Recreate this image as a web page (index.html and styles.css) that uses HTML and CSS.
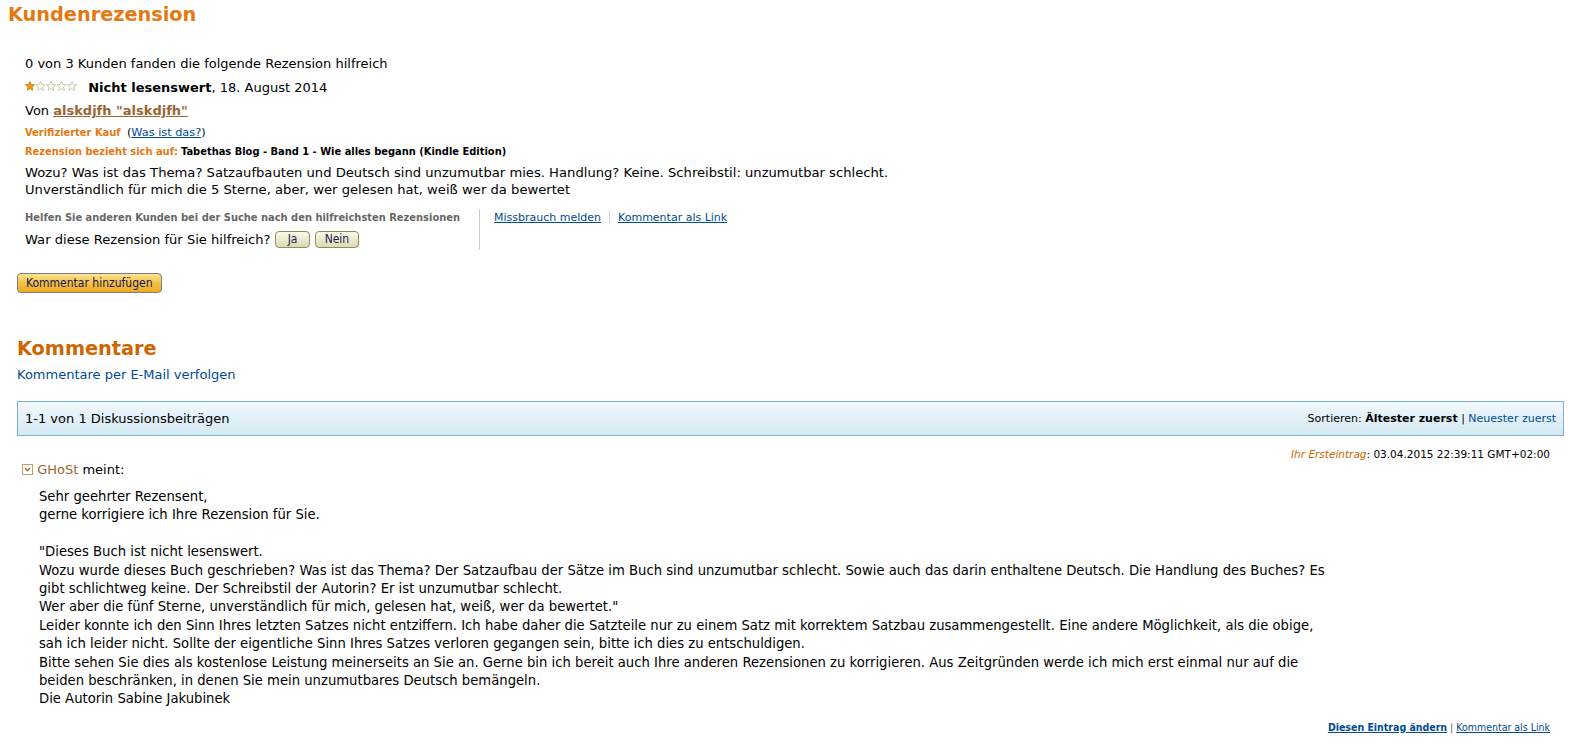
FILE: index.html
```html
<!doctype html>
<html>
<head>
<meta charset="utf-8">
<title>Kundenrezension</title>
<link rel="stylesheet" href="styles.css">
</head>
<body>
<h1 class="title">Kundenrezension</h1>

<div class="review">
	<div class="helpful">0 von 3 Kunden fanden die folgende Rezension hilfreich</div>
	<div class="head">
		<span class="stars">
			<svg width="53" height="10" viewBox="0 0 53 10">
				<polygon points="5,0.5 6.3,3.6 9.6,3.8 7,6 7.9,9.4 5,7.5 2.1,9.4 3,6 0.4,3.8 3.7,3.6" fill="#f0a30a" stroke="#b56f00" stroke-width="0.7"/>
				<g fill="none" stroke="#b9b48c" stroke-width="0.7">
					<polygon points="15.5,0.5 16.8,3.6 20.1,3.8 17.5,6 18.4,9.4 15.5,7.5 12.6,9.4 13.5,6 10.9,3.8 14.2,3.6"/>
					<polygon points="26,0.5 27.3,3.6 30.6,3.8 28,6 28.9,9.4 26,7.5 23.1,9.4 24,6 21.4,3.8 24.7,3.6"/>
					<polygon points="36.5,0.5 37.8,3.6 41.1,3.8 38.5,6 39.4,9.4 36.5,7.5 33.6,9.4 34.5,6 31.9,3.8 35.2,3.6"/>
					<polygon points="47,0.5 48.3,3.6 51.6,3.8 49,6 49.9,9.4 47,7.5 44.1,9.4 45,6 42.4,3.8 45.7,3.6"/>
				</g>
			</svg>
		</span>
		<b>Nicht lesenswert</b>, 18. August 2014
	</div>
	<div class="author">Von <a href="#" class="author-link">alskdjfh "alskdjfh"</a></div>
	<div class="small"><b class="orange">Verifizierter Kauf</b>&nbsp; <span class="small-link">(<a href="#" class="link">Was ist das?</a>)</span></div>
	<div class="small"><b class="orange">Rezension bezieht sich auf:</b> <b>Tabethas Blog - Band 1 - Wie alles begann (Kindle Edition)</b></div>
	<div class="text">Wozu? Was ist das Thema? Satzaufbauten und Deutsch sind unzumutbar mies. Handlung? Keine. Schreibstil: unzumutbar schlecht.<br>Unverständlich für mich die 5 Sterne, aber, wer gelesen hat, weiß wer da bewertet</div>

	<div class="vote">
		<div class="vote-left">
			<div class="vote-hint">Helfen Sie anderen Kunden bei der Suche nach den hilfreichsten Rezensionen</div>
			<div class="vote-q">War diese Rezension für Sie hilfreich? <span class="btn-small btn-ja">Ja</span> <span class="btn-small">Nein</span></div>
		</div>
		<div class="vote-right">
			<a href="#" class="link">Missbrauch melden</a><span class="sep"></span><a href="#" class="link">Kommentar als Link</a>
		</div>
	</div>
</div>

<div class="add"><span class="btn-gold">Kommentar hinzufügen</span></div>

<div class="comments">
	<h2 class="title2">Kommentare</h2>
	<a href="#" class="follow">Kommentare per E-Mail verfolgen</a>

	<div class="bar">
		<span>1-1 von 1 Diskussionsbeiträgen</span>
		<span class="sort">Sortieren: <b>Ältester zuerst</b> | <a href="#" class="plain">Neuester zuerst</a></span>
	</div>

	<div class="post">
		<div class="post-date"><i class="orange2">Ihr Ersteintrag</i>: 03.04.2015 22:39:11 GMT+02:00</div>
		<div class="post-who">
			<svg class="toggle" width="11" height="11" viewBox="0 0 11 11">
				<rect x="0.5" y="0.5" width="10" height="10" fill="#fff" stroke="#c89a5e"/>
				<polyline points="3,4 5.5,6.5 8,4" fill="none" stroke="#9a6a2a" stroke-width="1.3"/>
			</svg>
			<span class="ghost">GHoSt</span> meint:
		</div>
		<div class="post-body">
			<p>Sehr geehrter Rezensent,<br>gerne korrigiere ich Ihre Rezension für Sie.</p>
			<p>"Dieses Buch ist nicht lesenswert.<br>Wozu wurde dieses Buch geschrieben? Was ist das Thema? Der Satzaufbau der Sätze im Buch sind unzumutbar schlecht. Sowie auch das darin enthaltene Deutsch. Die Handlung des Buches? Es gibt schlichtweg keine. Der Schreibstil der Autorin? Er ist unzumutbar schlecht.<br>Wer aber die fünf Sterne, unverständlich für mich, gelesen hat, weiß, wer da bewertet."<br>Leider konnte ich den Sinn Ihres letzten Satzes nicht entziffern. Ich habe daher die Satzteile nur zu einem Satz mit korrektem Satzbau zusammengestellt. Eine andere Möglichkeit, als die obige, sah ich leider nicht. Sollte der eigentliche Sinn Ihres Satzes verloren gegangen sein, bitte ich dies zu entschuldigen.<br>Bitte sehen Sie dies als kostenlose Leistung meinerseits an Sie an. Gerne bin ich bereit auch Ihre anderen Rezensionen zu korrigieren. Aus Zeitgründen werde ich mich erst einmal nur auf die beiden beschränken, in denen Sie mein unzumutbares Deutsch bemängeln.<br>Die Autorin Sabine Jakubinek</p>
		</div>
		<div class="post-foot"><a href="#" class="link bold">Diesen Eintrag ändern</a> <span class="pipe">|</span> <a href="#" class="link">Kommentar als Link</a></div>
	</div>
</div>
</body>
</html>
```

FILE: styles.css
```css
*{ margin:0; padding:0;}
body{ font-family:"DejaVu Sans", Verdana, sans-serif; font-size:13px; color:#000; background:#fff;}
a{ color:#004b91;}
.title{ font-size:19.3px; color:#e47911; font-weight:bold; padding:3px 8px 0; line-height:24px;}
.review{ padding:28px 0 0 25px;}
.helpful{ line-height:18px; margin-bottom:6px;}
.head{ line-height:18px; margin-bottom:5px;}
.stars{ display:inline-block; width:59px; vertical-align:1px;}
.stars svg{ display:block;}
.author{ line-height:18px; margin-bottom:6px;}
.author-link{ color:#996633; font-weight:bold;}
.small{ font-family:"DejaVu Sans Condensed", Tahoma, sans-serif; font-size:11px; line-height:14px; margin-bottom:5px;}
.small-link{ font-family:"DejaVu Sans", Verdana, sans-serif; font-size:11.3px;}
.orange{ color:#e47911;}
.link{ color:#004b91;}
.bold{ font-weight:bold;}
.text{ line-height:17px; margin-top:3px; font-size:13.15px;}
.vote{ display:flex; margin-top:11px;}
.vote-left{ padding-right:19px; border-right:1px solid #ccc; height:41px;}
.vote-hint{ font-family:"DejaVu Sans Condensed", Tahoma, sans-serif; font-size:11px; font-weight:bold; color:#666; line-height:14px; margin-top:2px;}
.vote-q{ font-size:13.1px; line-height:22px; margin-top:4px;}
.btn-small{ display:inline-block; font-family:"DejaVu Sans Condensed", sans-serif; font-size:12px; color:#1a1a5a; line-height:15px; padding:0 9px; border:1px solid #8f8c5e; border-radius:4px; background:linear-gradient(#fbfbe9, #dcdab0); vertical-align:1px;}
.btn-ja{ padding:0 12px;}
.vote-right{ padding-left:14px; font-size:11px; line-height:14px; padding-top:2px;}
.sep{ display:inline-block; width:1px; height:12px; background:#ccc; margin:0 8px; vertical-align:-2px;}
.add{ padding:23px 0 0 17px;}
.btn-gold{ display:inline-block; font-family:"DejaVu Sans Condensed", sans-serif; font-size:12px; color:#141450; line-height:18px; padding:0 8px; border:1px solid #7c7b8c; border-radius:4px; background:linear-gradient(#fde595, #f5c144 50%, #eeab1e);}
.comments{ padding:44px 5px 0 17px;}
.title2{ font-size:19.3px; color:#cc6600; font-weight:bold; line-height:24px;}
.follow{ display:block; text-decoration:none; line-height:18px; margin-top:5px;}
.bar{ display:flex; justify-content:space-between; align-items:center; height:33px; margin-top:17px; padding:0 7px; border:1px solid #7fb1cb; background:linear-gradient(#f1f9fd, #d4e8f2);}
.sort{ font-size:11px;}
.plain{ text-decoration:none;}
.post-date{ text-align:right; font-size:10.5px; padding:11px 14px 0 0; line-height:14px;}
.orange2{ color:#cc6600;}
.post-who{ line-height:18px; padding-left:5px;}
.toggle{ vertical-align:-1px;}
.ghost{ color:#996633;}
.post-body{ padding:9px 0 0 22px; width:1296px; line-height:18.4px; font-size:13.2px;}
.post-body p{ margin-bottom:18.4px;}
.post-body p:last-child{ margin-bottom:11px;}
.post-foot{ text-align:right; font-family:"DejaVu Sans Condensed", Tahoma, sans-serif; font-size:10.5px; padding:0 14px 0 0; line-height:14px;}
.pipe{ color:#666;}
```
